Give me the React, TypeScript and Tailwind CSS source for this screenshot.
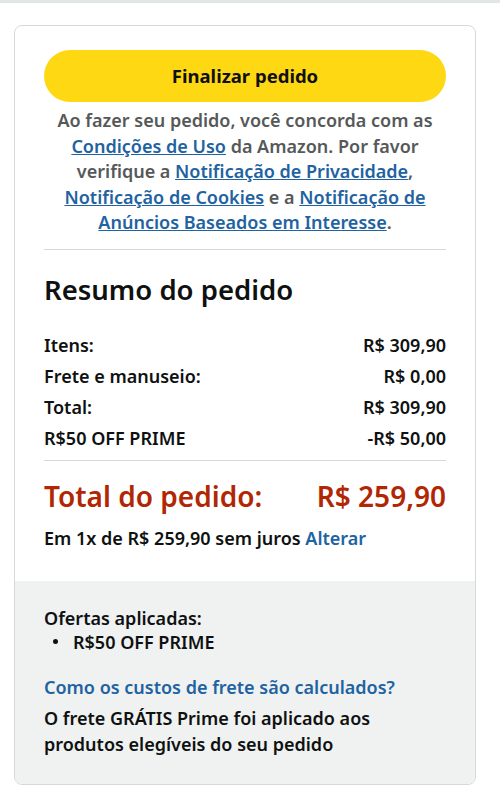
export default function App() {
  const rows = [
    { label: 'Itens:', value: 'R$ 309,90' },
    { label: 'Frete e manuseio:', value: 'R$ 0,00' },
    { label: 'Total:', value: 'R$ 309,90' },
    { label: 'R$50 OFF PRIME', value: '-R$ 50,00' },
  ]

  return (
    <div className="min-h-[805px] bg-white text-[#0f1111] font-['Noto_Sans',Arial,sans-serif]">
      <div className="h-[3px] bg-[#e3e6e6]" />

      <div className="pt-[22px] px-[14px]">
        {/* Card */}
        <div className="w-[462px] border border-[#d5d9d9] rounded-lg overflow-hidden">
          <div className="px-[29px] pt-[24px] pb-[31px]">
            <button
              type="button"
              className="w-full h-[52px] rounded-full bg-[#ffd814] text-[18.5px] font-bold text-[#0f1111]"
            >
              Finalizar pedido
            </button>

            <p className="mt-[6px] text-center text-[18px] leading-[25.5px] font-semibold text-[#565959]">
              Ao fazer seu pedido, você concorda com as
              <br />
              <a className="text-[#2162a1] underline">Condições de Uso</a> da Amazon. Por favor
              <br />
              verifique a <a className="text-[#2162a1] underline">Notificação de Privacidade</a>,
              <br />
              <a className="text-[#2162a1] underline">Notificação de Cookies</a> e a{' '}
              <a className="text-[#2162a1] underline">Notificação de</a>
              <br />
              <a className="text-[#2162a1] underline">Anúncios Baseados em Interesse</a>.
            </p>

            <div className="mt-[13px] h-px bg-[#d5d9d9]" />

            {/* Summary */}
            <h2 className="mt-[23px] text-[27.5px] leading-[34px] font-semibold">Resumo do pedido</h2>

            <div className="mt-[26px] flex flex-col gap-[7px] text-[18px] leading-[24px] font-semibold">
              {rows.map((r) => (
                <div key={r.label} className="flex justify-between">
                  <span>{r.label}</span>
                  <span>{r.value}</span>
                </div>
              ))}
            </div>

            <div className="mt-[10px] h-px bg-[#d5d9d9]" />

            <div className="mt-[18px] flex justify-between text-[28px] leading-[34px] font-semibold text-[#b12704]">
              <span>Total do pedido:</span>
              <span>R$ 259,90</span>
            </div>

            <p className="mt-[13px] text-[18px] leading-[24px] font-semibold">
              Em 1x de R$ 259,90 sem juros <a className="text-[#2162a1]">Alterar</a>
            </p>
          </div>

          {/* Offers */}
          <div className="bg-[#f0f2f2] px-[29px] pt-[25px] pb-[27px] text-[18px] font-semibold">
            <p className="leading-[24px]">Ofertas aplicadas:</p>
            <div className="flex items-center leading-[24px]">
              <span className="ml-[9px] mr-[15px] w-[5px] h-[5px] rounded-full bg-[#0f1111]" />
              <span>R$50 OFF PRIME</span>
            </div>
            <p className="mt-[21px] leading-[24px] text-[#2162a1]">Como os custos de frete são calculados?</p>
            <p className="mt-[6px] leading-[26px]">
              O frete GRÁTIS Prime foi aplicado aos
              <br />
              produtos elegíveis do seu pedido
            </p>
          </div>
        </div>
      </div>
    </div>
  )
}
